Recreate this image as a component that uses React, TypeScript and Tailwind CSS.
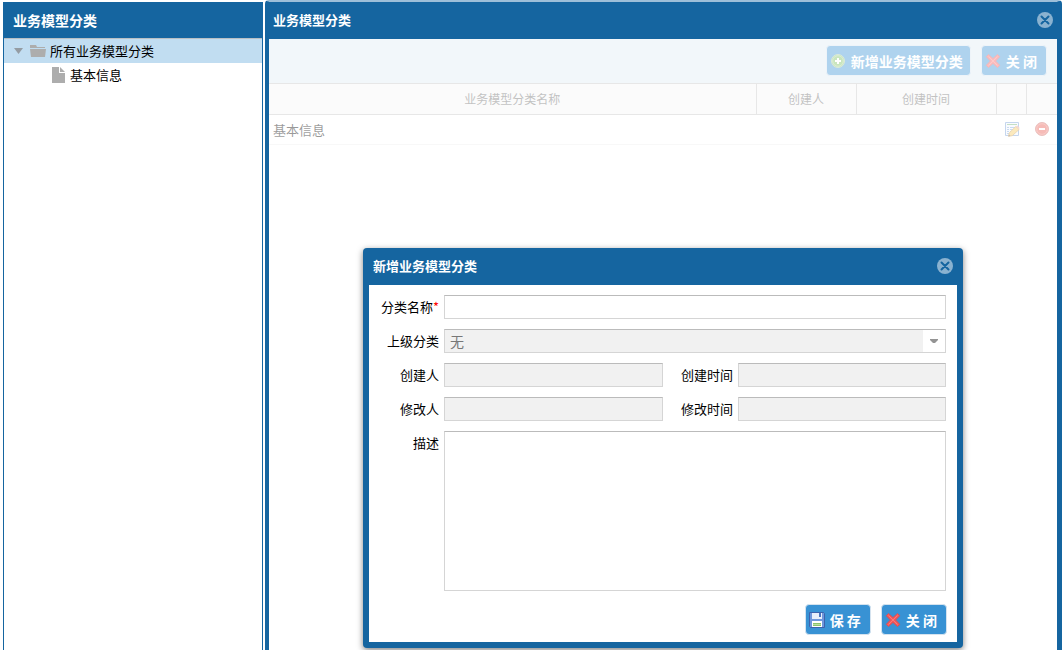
import React, { useState, FormEvent } from 'react';

function CloseCircleIcon() {
  return (
    <svg width="16" height="16" viewBox="0 0 16 16">
      <circle cx="8" cy="8" r="8" fill="#8ab2d0" />
      <path d="M4.500 4.500l7 7M11.500 4.500l-7 7" stroke="#1565a0" strokeWidth="2" strokeLinecap="round" />
    </svg>
  );
}

function RedCrossIcon() {
  return (
    <svg width="16" height="16" viewBox="0 0 16 16">
      <path
        d="M3.500 1.500L8 5.600l4.500-4.100 2.200 2.200L10.600 8l4.100 4.300-2.200 2.200L8 10.400l-4.500 4.100-2.200-2.200L5.400 8 1.300 3.700z"
        fill="#f4585a"
        stroke="#e2474c"
        strokeWidth=".8"
        strokeLinejoin="round"
      />
      <path d="M3.500 3.500L8 8l4.500-4.500M3.500 12.500L8 8l4.500 4.500" stroke="#fb7a78" fill="none" />
    </svg>
  );
}

function AddIcon() {
  return (
    <svg width="16" height="16" viewBox="0 0 16 16">
      <circle cx="8" cy="8" r="6.500" fill="#79bd5c" stroke="#a3c9a0" />
      <circle cx="8" cy="8" r="5.300" fill="none" stroke="#a5d68f" />
      <path d="M8 5v6M5 8h6" stroke="#fff" strokeWidth="2" />
    </svg>
  );
}

function RemoveIcon() {
  return (
    <svg width="16" height="16" viewBox="0 0 16 16">
      <circle cx="8" cy="8" r="6.500" fill="#e8564c" stroke="#c9655e" />
      <circle cx="8" cy="8" r="5.300" fill="none" stroke="#ee8077" />
      <path d="M5 8h6" stroke="#fff" strokeWidth="2" />
    </svg>
  );
}

function EditIcon() {
  return (
    <svg width="16" height="16" viewBox="0 0 16 16">
      <path d="M1.500 1.500h13v13h-13z" fill="#f0f6fd" stroke="#6f98d4" />
      <path d="M3 3.500h10" stroke="#6fae6b" />
      <path d="M3 6.500h2M6 6.500h7M3 8.500h2M6 8.500h5M3 10.500h2M6 10.500h3M3 12.500h2" stroke="#7ba2da" />
      <path d="M4.500 15.300l.8-3.500 6.500-6.300 3.400 2.900-6.900 6.300z" fill="#f5c95a" stroke="#c08f3a" strokeWidth=".8" />
      <path d="M11.800 5.500l1.500-1 2.300 2.200-.8 1.700z" fill="#e8a08a" />
      <path d="M4.400 15.400l.5-1.900 1.600 1.400z" fill="#6b5236" />
    </svg>
  );
}

function SaveIcon() {
  return (
    <svg width="16" height="16" viewBox="0 0 16 16">
      <path d="M.5.5h14l1 1v14H1.500l-1-1z" fill="#6f97dc" stroke="#3d63ad" />
      <path d="M3 1h10v6H3z" fill="#e8effb" />
      <path d="M10 1h2v4h-2z" fill="#4b74be" />
      <path d="M3 9h10v6H3z" fill="#fff" />
      <path d="M4 11h8v3H4z" fill="#8cc46b" />
      <path d="M4 12.500h8" stroke="#b9dea3" />
    </svg>
  );
}

function FolderIcon() {
  return (
    <svg width="16" height="16" viewBox="0 0 16 16">
      <path d="M0 2h6l1 2h8v1H0z" fill="#adadad" />
      <path d="M0 6h16l-1 8H1z" fill="#adadad" />
    </svg>
  );
}

function FileIcon() {
  return (
    <svg width="14" height="16" viewBox="0 0 14 16">
      <path d="M0 0h7v6h6v10H0z" fill="#adadad" />
      <path d="M8 0l5 5H8z" fill="#adadad" />
    </svg>
  );
}

const buttonClass =
  'flex h-[31px] items-center gap-[5px] rounded-sm border border-[#d5e3ef] bg-[#3892d4] pl-[3px] pr-[7px] text-[14px] font-bold leading-5 text-white';
const fieldClass =
  'h-6 border border-[#d5d5d5] border-t-[#bbbbbb] bg-white px-[5px] text-[13px] outline-none disabled:bg-[#f1f1f1]';
const labelClass = 'w-[70px] shrink-0 text-right leading-6';
const midLabelClass = 'w-[65px] shrink-0 text-right leading-6';

export default function App() {
  const [name, setName] = useState('');
  const [desc, setDesc] = useState('');
  const [open, setOpen] = useState(true);

  const handleSubmit = (e: FormEvent) => {
    e.preventDefault();
    setOpen(false);
  };

  return (
    <div className="flex min-h-screen gap-[2px] overflow-hidden bg-white pl-[3px] font-['Noto_Sans_CJK_SC',sans-serif] text-[13px] text-black">
      {/* Category tree */}
      <aside className="mt-[2px] w-[260px] shrink-0 border-x border-[#1565a0]">
        <h2 className="h-9 bg-[#1565a0] px-[9px] text-[14px] font-bold leading-9 text-white">业务模型分类</h2>
        <ul className="border-t border-[#b9bfc4]">
          <li>
            <div className="flex h-6 items-center bg-[#c1ddf1] pl-[10px]">
              <svg width="10" height="6" viewBox="0 0 10 6">
                <path d="M0 0h9L4.500 6z" fill="#949ca3" />
              </svg>
              <span className="ml-[6px] mr-1"><FolderIcon /></span>
              <span>所有业务模型分类</span>
            </div>
            <ul>
              <li className="flex h-6 items-center gap-1 pl-12">
                <FileIcon />
                <span>基本信息</span>
              </li>
            </ul>
          </li>
        </ul>
      </aside>

      {/* Category list */}
      <main className="flex min-w-0 flex-1 flex-col rounded-t border-l-4 border-r-[5px] border-t-2 border-[#1565a0] border-t-[#9dbfd9] bg-[#1565a0]">
        <header className="flex h-[37px] items-center justify-between px-1 pb-[2px]">
          <h1 className="font-bold text-white">业务模型分类</h1>
          <button type="button" aria-label="关闭窗口"><CloseCircleIcon /></button>
        </header>

        <div className="relative flex-1 bg-white">
          <div className="flex h-11 items-center justify-end gap-[10px] bg-[#dfeaf2] pb-px pr-[10px]">
            <button type="button" className={buttonClass} onClick={() => setOpen(true)}>
              <AddIcon />
              新增业务模型分类
            </button>
            <button type="button" className={buttonClass}>
              <RedCrossIcon />
              <span className="pr-[2px]">关 闭</span>
            </button>
          </div>
          <table className="w-full table-fixed border-collapse">
            <thead>
              <tr className="h-[31px] border-y border-[#c4c4c4] bg-[#f5f5f5] text-[12px] text-[#666]">
                <th className="border-r border-[#c4c4c4] font-normal">业务模型分类名称</th>
                <th className="w-[100px] border-r border-[#c4c4c4] font-normal">创建人</th>
                <th className="w-[140px] border-r border-[#c4c4c4] font-normal">创建时间</th>
                <th className="w-[30px] border-r border-[#c4c4c4]"></th>
                <th className="w-[31px]"></th>
              </tr>
            </thead>
            <tbody>
              <tr className="h-[30px] border-b border-[#ededed]">
                <td className="pl-1">基本信息</td>
                <td></td>
                <td></td>
                <td className="pb-[2px]"><button type="button" aria-label="编辑" className="ml-2 block"><EditIcon /></button></td>
                <td className="pb-[2px]"><button type="button" aria-label="删除" className="ml-2 block"><RemoveIcon /></button></td>
              </tr>
            </tbody>
          </table>

          {open && (
            <div className="absolute inset-0 bg-white/60">
              <form
                role="dialog"
                aria-labelledby="dialog-title"
                onSubmit={handleSubmit}
                className="mx-auto mt-[209px] w-[600px] rounded bg-[#1565a0] px-[6px] pb-[6px] shadow-[0_2px_6px_rgba(0,0,0,0.5)]"
              >
                <div className="flex h-[37px] items-center justify-between px-1 pb-[2px]">
                  <h2 id="dialog-title" className="font-bold text-white">新增业务模型分类</h2>
                  <button type="button" aria-label="关闭" onClick={() => setOpen(false)}><CloseCircleIcon /></button>
                </div>

                <div className="space-y-[10px] bg-white pb-[7px] pr-[11px] pt-[10px]">
                  <div className="flex gap-[5px]">
                    <label htmlFor="name" className={labelClass}>
                      分类名称<span className="text-[#ff0000]">*</span>
                    </label>
                    <input id="name" className={`${fieldClass} min-w-0 flex-1`} value={name} onChange={e => setName(e.target.value)} />
                  </div>

                  <div className="flex gap-[5px]">
                    <label htmlFor="parent" className={labelClass}>上级分类</label>
                    <div className="relative flex-1">
                      <select
                        id="parent"
                        disabled
                        className="block h-6 w-full appearance-none border border-[#d5d5d5] border-t-[#bbbbbb] bg-[#f1f1f1] px-[5px] text-[14px] leading-5 text-[#777] opacity-100"
                      >
                        <option>无</option>
                      </select>
                      <span className="pointer-events-none absolute right-px top-px flex h-[22px] w-[22px] items-center justify-center bg-white">
                        <svg width="8" height="4" viewBox="0 0 8 4">
                          <path d="M0 0h8v1L5 4H3L0 1z" fill="#949494" />
                        </svg>
                      </span>
                    </div>
                  </div>

                  <div className="flex gap-[5px]">
                    <label htmlFor="creator" className={labelClass}>创建人</label>
                    <input id="creator" disabled className={`${fieldClass} min-w-0 flex-1`} />
                    <label htmlFor="created" className={midLabelClass}>创建时间</label>
                    <input id="created" disabled className={`${fieldClass} w-[208px]`} />
                  </div>

                  <div className="flex gap-[5px]">
                    <label htmlFor="modifier" className={labelClass}>修改人</label>
                    <input id="modifier" disabled className={`${fieldClass} min-w-0 flex-1`} />
                    <label htmlFor="modified" className={midLabelClass}>修改时间</label>
                    <input id="modified" disabled className={`${fieldClass} w-[208px]`} />
                  </div>

                  <div className="flex gap-[5px]">
                    <label htmlFor="desc" className={labelClass}>描述</label>
                    <textarea
                      id="desc"
                      className="block h-40 min-w-0 flex-1 resize-none border border-[#d5d5d5] border-t-[#bbbbbb] px-[5px] outline-none"
                      value={desc}
                      onChange={e => setDesc(e.target.value)}
                    />
                  </div>

                  <div className="-mr-px flex justify-end gap-[10px] pt-[3px]">
                    <button type="submit" className={buttonClass}>
                      <SaveIcon />
                      <span className="pr-[2px]">保 存</span>
                    </button>
                    <button type="button" className={buttonClass} onClick={() => setOpen(false)}>
                      <RedCrossIcon />
                      <span className="pr-[2px]">关 闭</span>
                    </button>
                  </div>
                </div>
              </form>
            </div>
          )}
        </div>
      </main>
    </div>
  );
}
